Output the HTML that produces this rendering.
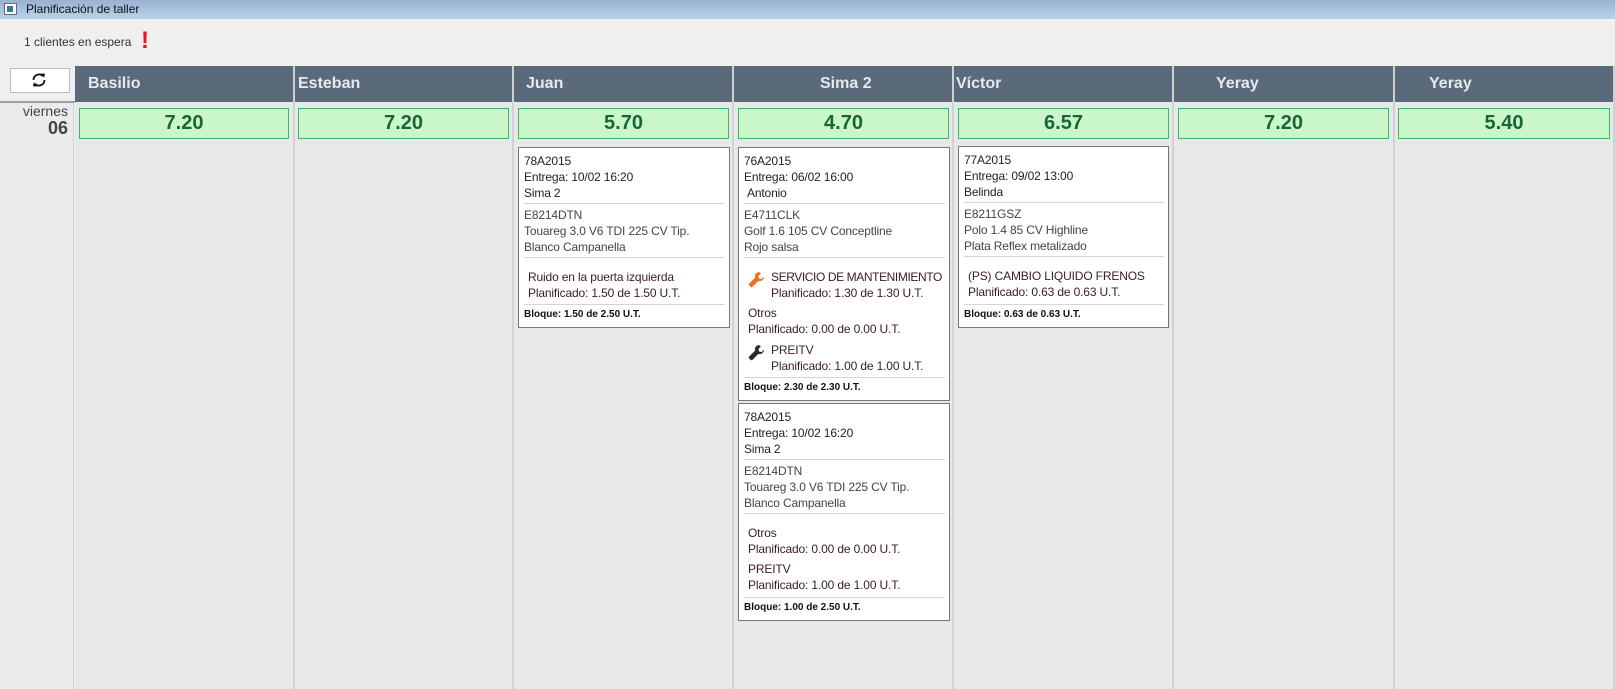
<!DOCTYPE html>
<html><head><meta charset="utf-8"><style>
*{margin:0;padding:0;box-sizing:border-box}
body{width:1615px;height:689px;background:#efefef;font-family:"Liberation Sans",sans-serif;position:relative;overflow:hidden;color:#222}
.a{position:absolute}
.title{left:0;top:0;width:1615px;height:19px;background:linear-gradient(#98b2d0,#b8d3eb);font-size:12px;line-height:19px;padding-left:26px;color:#111}
.col{top:66px;height:623px;background:#e8e8e8;border-right:2px solid #d2d2d2}
.hdr{top:66px;height:36px;background:#5a6a7a;color:#e6eaee;font-weight:bold;font-size:16px;line-height:36px;border-right:2px solid #d0d0d0}
.val{top:108px;height:31px;background:#c9f7c9;border:1px solid #3cb46e;color:#1b6436;font-weight:bold;font-size:20px;line-height:29px;text-align:center}
.card{background:#fff;border:1px solid #777;font-size:12px;line-height:16px;padding:5px 4px 0 5px;white-space:nowrap;overflow:hidden;letter-spacing:-0.15px}
.sep{border-top:1px solid #d4d4d4;margin:2px 0 3px}
.g{color:#444}
.t{color:#3a1e1e}
.b{font-weight:bold;font-size:10px;line-height:14px;color:#111;letter-spacing:0}
.ic{position:absolute;left:5px;width:17px;height:17px}
</style></head><body>
<div class="a title">Planificación de taller</div>
<div class="a" style="left:4px;top:3px;width:13px;height:12px;border:1px solid #667;background:#fff"><div style="margin:2px;width:6px;height:6px;background:#3a7a8a"></div></div>
<div class="a" style="left:24px;top:35px;font-size:12px;color:#333">1 clientes en espera</div>
<div class="a" style="left:141px;top:28px;color:#e8141e;font-size:24px;font-weight:bold;line-height:26px">!</div>
<div class="a" style="left:0;top:102px;width:74px;height:587px;background:#ebebeb;border-right:1px solid #d2d2d2"></div>
<div class="a" style="left:0;top:101px;width:1615px;height:2px;background:#9aa0a6"></div>
<div class="a" style="left:10px;top:68px;width:60px;height:25px;background:#fff;border:1px solid #bbb"></div>
<svg class="a" style="left:30px;top:71px" width="18" height="18" viewBox="0 0 18 18"><path d="M3.5 9a5.5 5.5 0 0 1 9.5-3.8" fill="none" stroke="#111" stroke-width="1.8"/><path d="M14.5 9a5.5 5.5 0 0 1-9.5 3.8" fill="none" stroke="#111" stroke-width="1.8"/><path d="M11 2.5l4 .3-.8 4z" fill="#111"/><path d="M7 15.5l-4-.3.8-4z" fill="#111"/></svg>
<div class="a" style="left:22px;top:103px;width:46px;text-align:right;font-size:14px;color:#444;line-height:16px">viernes</div>
<div class="a" style="left:22px;top:118px;width:46px;text-align:right;font-size:18px;font-weight:bold;color:#444;line-height:20px">06</div>

<div class="a col" style="left:75px;width:220px"></div>
<div class="a col" style="left:295px;width:219px"></div>
<div class="a col" style="left:514px;width:220px"></div>
<div class="a col" style="left:734px;width:220px"></div>
<div class="a col" style="left:954px;width:220px"></div>
<div class="a col" style="left:1174px;width:221px"></div>
<div class="a col" style="left:1395px;width:220px"></div>

<div class="a hdr" style="left:75px;width:220px;padding-left:13px">Basilio</div>
<div class="a hdr" style="left:295px;width:219px;padding-left:3px">Esteban</div>
<div class="a hdr" style="left:514px;width:220px;padding-left:12px">Juan</div>
<div class="a hdr" style="left:734px;width:220px;padding-left:86px">Sima 2</div>
<div class="a hdr" style="left:954px;width:220px;padding-left:2px">Víctor</div>
<div class="a hdr" style="left:1174px;width:221px;padding-left:42px">Yeray</div>
<div class="a hdr" style="left:1395px;width:220px;padding-left:34px">Yeray</div>

<div class="a val" style="left:79px;width:210px">7.20</div>
<div class="a val" style="left:298px;width:211px">7.20</div>
<div class="a val" style="left:518px;width:211px">5.70</div>
<div class="a val" style="left:738px;width:211px">4.70</div>
<div class="a val" style="left:958px;width:211px">6.57</div>
<div class="a val" style="left:1178px;width:211px">7.20</div>
<div class="a val" style="left:1398px;width:212px">5.40</div>

<div class="a card" style="left:518px;top:147px;width:212px;height:181px">
<div>78A2015</div><div>Entrega: 10/02 16:20</div><div>Sima 2</div>
<div class="sep"></div>
<div class="g">E8214DTN</div><div class="g">Touareg 3.0 V6 TDI 225 CV Tip.</div><div class="g">Blanco Campanella</div>
<div class="sep"></div>
<div class="t" style="padding:8px 0 0 4px">Ruido en la puerta izquierda<br>Planificado: 1.50 de 1.50 U.T.</div>
<div class="sep" style="margin-top:3px"></div>
<div class="b">Bloque: 1.50 de 2.50 U.T.</div>
</div>

<div class="a card" style="left:738px;top:147px;width:212px;height:254px">
<div>76A2015</div><div>Entrega: 06/02 16:00</div><div style="padding-left:3px">Antonio</div>
<div class="sep"></div>
<div class="g">E4711CLK</div><div class="g">Golf 1.6 105 CV Conceptline</div><div class="g">Rojo salsa</div>
<div class="sep"></div>
<div class="t" style="position:relative;padding:8px 0 0 27px;letter-spacing:-0.4px">
<svg class="ic" style="top:10px;left:4px" viewBox="0 0 16 16"><path d="M10.5 1a4 4 0 0 0-3.8 5.2L1.2 11.7a1.4 1.4 0 0 0 0 2l1.1 1.1a1.4 1.4 0 0 0 2 0l5.5-5.5A4 4 0 0 0 15 5.3l-2.3 2.3-2.3-.6-.6-2.3L12.1 2.4A4 4 0 0 0 10.5 1z" fill="#f07020"/></svg>
SERVICIO DE MANTENIMIENTO<br><span style="letter-spacing:-0.15px">Planificado: 1.30 de 1.30 U.T.</span></div>
<div class="t" style="padding:4px 0 0 4px">Otros<br>Planificado: 0.00 de 0.00 U.T.</div>
<div class="t" style="position:relative;padding:5px 0 0 27px">
<svg class="ic" style="top:7px;left:4px" viewBox="0 0 16 16"><path d="M10.5 1a4 4 0 0 0-3.8 5.2L1.2 11.7a1.4 1.4 0 0 0 0 2l1.1 1.1a1.4 1.4 0 0 0 2 0l5.5-5.5A4 4 0 0 0 15 5.3l-2.3 2.3-2.3-.6-.6-2.3L12.1 2.4A4 4 0 0 0 10.5 1z" fill="#2a2a2a"/></svg>
PREITV<br>Planificado: 1.00 de 1.00 U.T.</div>
<div class="sep" style="margin-top:3px"></div>
<div class="b">Bloque: 2.30 de 2.30 U.T.</div>
</div>

<div class="a card" style="left:738px;top:403px;width:212px;height:218px">
<div>78A2015</div><div>Entrega: 10/02 16:20</div><div>Sima 2</div>
<div class="sep"></div>
<div class="g">E8214DTN</div><div class="g">Touareg 3.0 V6 TDI 225 CV Tip.</div><div class="g">Blanco Campanella</div>
<div class="sep"></div>
<div class="t" style="padding:8px 0 0 4px">Otros<br>Planificado: 0.00 de 0.00 U.T.</div>
<div class="t" style="padding:4px 0 0 4px">PREITV<br>Planificado: 1.00 de 1.00 U.T.</div>
<div class="sep" style="margin-top:4px"></div>
<div class="b">Bloque: 1.00 de 2.50 U.T.</div>
</div>

<div class="a card" style="left:958px;top:146px;width:211px;height:182px">
<div>77A2015</div><div>Entrega: 09/02 13:00</div><div>Belinda</div>
<div class="sep"></div>
<div class="g">E8211GSZ</div><div class="g">Polo 1.4 85 CV Highline</div><div class="g">Plata Reflex metalizado</div>
<div class="sep"></div>
<div class="t" style="padding:8px 0 0 4px">(PS) CAMBIO LIQUIDO FRENOS<br>Planificado: 0.63 de 0.63 U.T.</div>
<div class="sep" style="margin-top:4px"></div>
<div class="b">Bloque: 0.63 de 0.63 U.T.</div>
</div>
</body></html>
